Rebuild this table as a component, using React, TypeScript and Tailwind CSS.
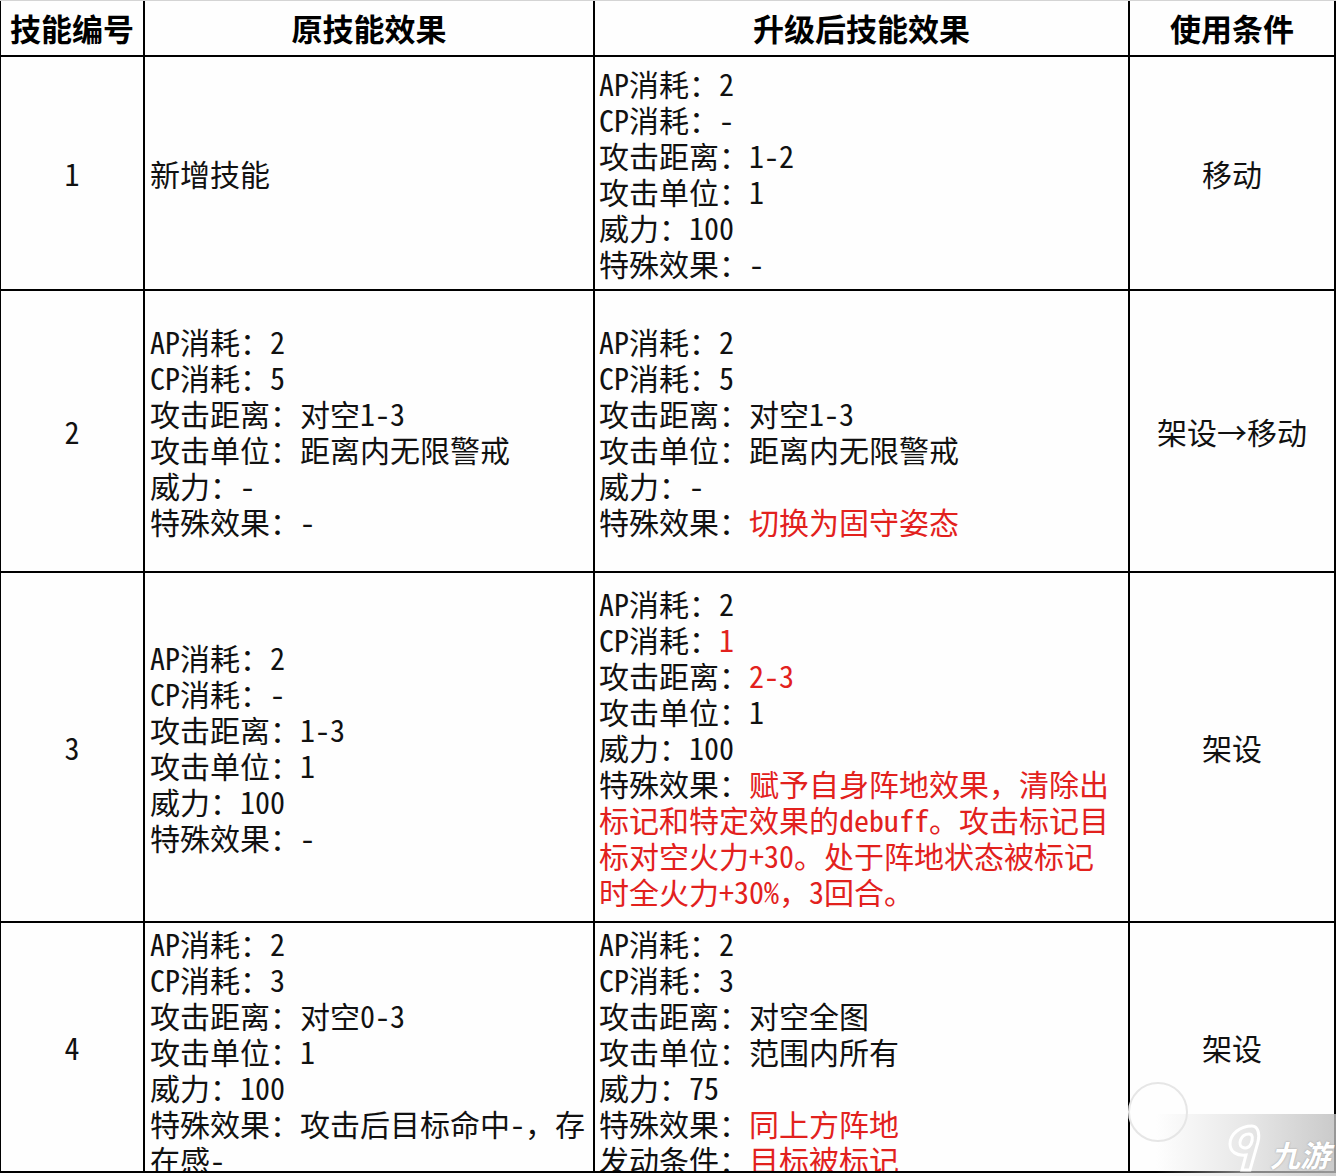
import React from "react";

type Seg = { t: string; red?: boolean };
type Line = Seg[];

const L = (t: string, r?: string): Line => {
  const segs: Line = [{ t }];
  if (r) segs.push({ t: r, red: true });
  return segs;
};
const R = (t: string): Line => [{ t, red: true }];

type Row = {
  no: string;
  orig: Line[];
  upgraded: Line[];
  cond: string;
  h: string;
  top?: boolean;
};

const rows: Row[] = [
  {
    no: "1",
    orig: [L("新增技能")],
    upgraded: [
      L("AP消耗：2"),
      L("CP消耗：-"),
      L("攻击距离：1-2"),
      L("攻击单位：1"),
      L("威力：100"),
      L("特殊效果：-"),
    ],
    cond: "移动",
    h: "h-[234px]",
  },
  {
    no: "2",
    orig: [
      L("AP消耗：2"),
      L("CP消耗：5"),
      L("攻击距离：对空1-3"),
      L("攻击单位：距离内无限警戒"),
      L("威力：-"),
      L("特殊效果：-"),
    ],
    upgraded: [
      L("AP消耗：2"),
      L("CP消耗：5"),
      L("攻击距离：对空1-3"),
      L("攻击单位：距离内无限警戒"),
      L("威力：-"),
      L("特殊效果：", "切换为固守姿态"),
    ],
    cond: "架设→移动",
    h: "h-[282px]",
  },
  {
    no: "3",
    orig: [
      L("AP消耗：2"),
      L("CP消耗：-"),
      L("攻击距离：1-3"),
      L("攻击单位：1"),
      L("威力：100"),
      L("特殊效果：-"),
    ],
    upgraded: [
      L("AP消耗：2"),
      L("CP消耗：", "1"),
      L("攻击距离：", "2-3"),
      L("攻击单位：1"),
      L("威力：100"),
      L("特殊效果：", "赋予自身阵地效果，清除出"),
      R("标记和特定效果的debuff。攻击标记目"),
      R("标对空火力+30。处于阵地状态被标记"),
      R("时全火力+30%，3回合。"),
    ],
    cond: "架设",
    h: "h-[350px]",
  },
  {
    no: "4",
    orig: [
      L("AP消耗：2"),
      L("CP消耗：3"),
      L("攻击距离：对空0-3"),
      L("攻击单位：1"),
      L("威力：100"),
      L("特殊效果：攻击后目标命中-，存"),
      L("在感-"),
    ],
    upgraded: [
      L("AP消耗：2"),
      L("CP消耗：3"),
      L("攻击距离：对空全图"),
      L("攻击单位：范围内所有"),
      L("威力：75"),
      L("特殊效果：", "同上方阵地"),
      L("发动条件：", "目标被标记"),
    ],
    cond: "架设",
    h: "h-[250px]",
    top: true,
  },
];

const body =
  "font-['Noto_Sans_Mono_CJK_SC','Noto_Sans_CJK_SC',monospace] text-[30px] leading-[36px] text-[#111]";

const Lines = ({ lines }: { lines: Line[] }) => (
  <>
    {lines.map((ln, i) => (
      <div key={i} className="whitespace-nowrap">
        {ln.map((s, j) => (
          <span key={j} className={s.red ? "text-[#e2211d]" : ""}>
            {s.t}
          </span>
        ))}
      </div>
    ))}
  </>
);

const App: React.FC = () => {
  return (
    <div className="relative w-[1336px] h-[1176px] bg-[#fefefe] overflow-hidden">
      {/* header */}
      <div className="flex h-[57px] border-t border-[#d4d4d4] font-['Noto_Sans_CJK_SC',sans-serif] font-bold text-[31px] text-black">
        <div className="w-[145px] flex items-center justify-center border-l border-[#cfcfcf] border-r-2 border-b-2 border-black">
          技能编号
        </div>
        <div className="w-[450px] flex items-center justify-center border-r-2 border-b-2 border-black">
          原技能效果
        </div>
        <div className="w-[535px] flex items-center justify-center border-r-2 border-b-2 border-black">
          升级后技能效果
        </div>
        <div className="w-[206px] flex items-center justify-center border-r-2 border-b-2 border-black">
          使用条件
        </div>
      </div>

      {rows.map((r) => (
        <div key={r.no} className={`flex ${r.h} ${body}`}>
          <div className="w-[145px] flex items-center justify-center border-l border-[#cfcfcf] border-r-2 border-b-2 border-black">
            {r.no}
          </div>
          <div
            className={`w-[450px] flex flex-col pl-[5px] overflow-hidden border-r-2 border-b-2 border-black ${
              r.top ? "justify-start pt-[2px]" : "justify-center"
            }`}
          >
            <Lines lines={r.orig} />
          </div>
          <div
            className={`w-[535px] flex flex-col pl-[4px] overflow-hidden border-r-2 border-b-2 border-black ${
              r.top ? "justify-start pt-[2px]" : "justify-center"
            }`}
          >
            <Lines lines={r.upgraded} />
          </div>
          <div className="w-[206px] flex items-center justify-center border-r-2 border-b-2 border-black">
            {r.cond}
          </div>
        </div>
      ))}

      {/* watermark */}
      <div className="absolute right-0 bottom-0 w-[180px] h-[62px] bg-gradient-to-l from-[#bdbdbd]/80 via-[#d8d8d8]/60 to-transparent" />
      <div className="absolute left-[1128px] top-[1082px] w-[60px] h-[60px] rounded-full border-2 border-[#e6e6e6]" />
      <div className="absolute right-[6px] bottom-[2px] flex items-end gap-[2px]">
        <svg width="46" height="52" viewBox="0 0 46 52">
          <path
            d="M30 4 C18 4 8 12 8 22 C8 30 15 34 24 33 L20 48 L28 48 L36 20 C38 12 36 4 30 4 Z M27 12 C31 12 31 17 29 22 C27 26 23 27 20 25 C16 23 18 12 27 12 Z"
            fill="none"
            stroke="#ffffff"
            strokeWidth="3"
          />
        </svg>
        <span className="font-['Noto_Sans_CJK_SC',sans-serif] font-bold italic text-[30px] leading-[40px] text-white [text-shadow:0_0_2px_#9a9a9a]">
          九游
        </span>
      </div>
    </div>
  );
};

export default App;
